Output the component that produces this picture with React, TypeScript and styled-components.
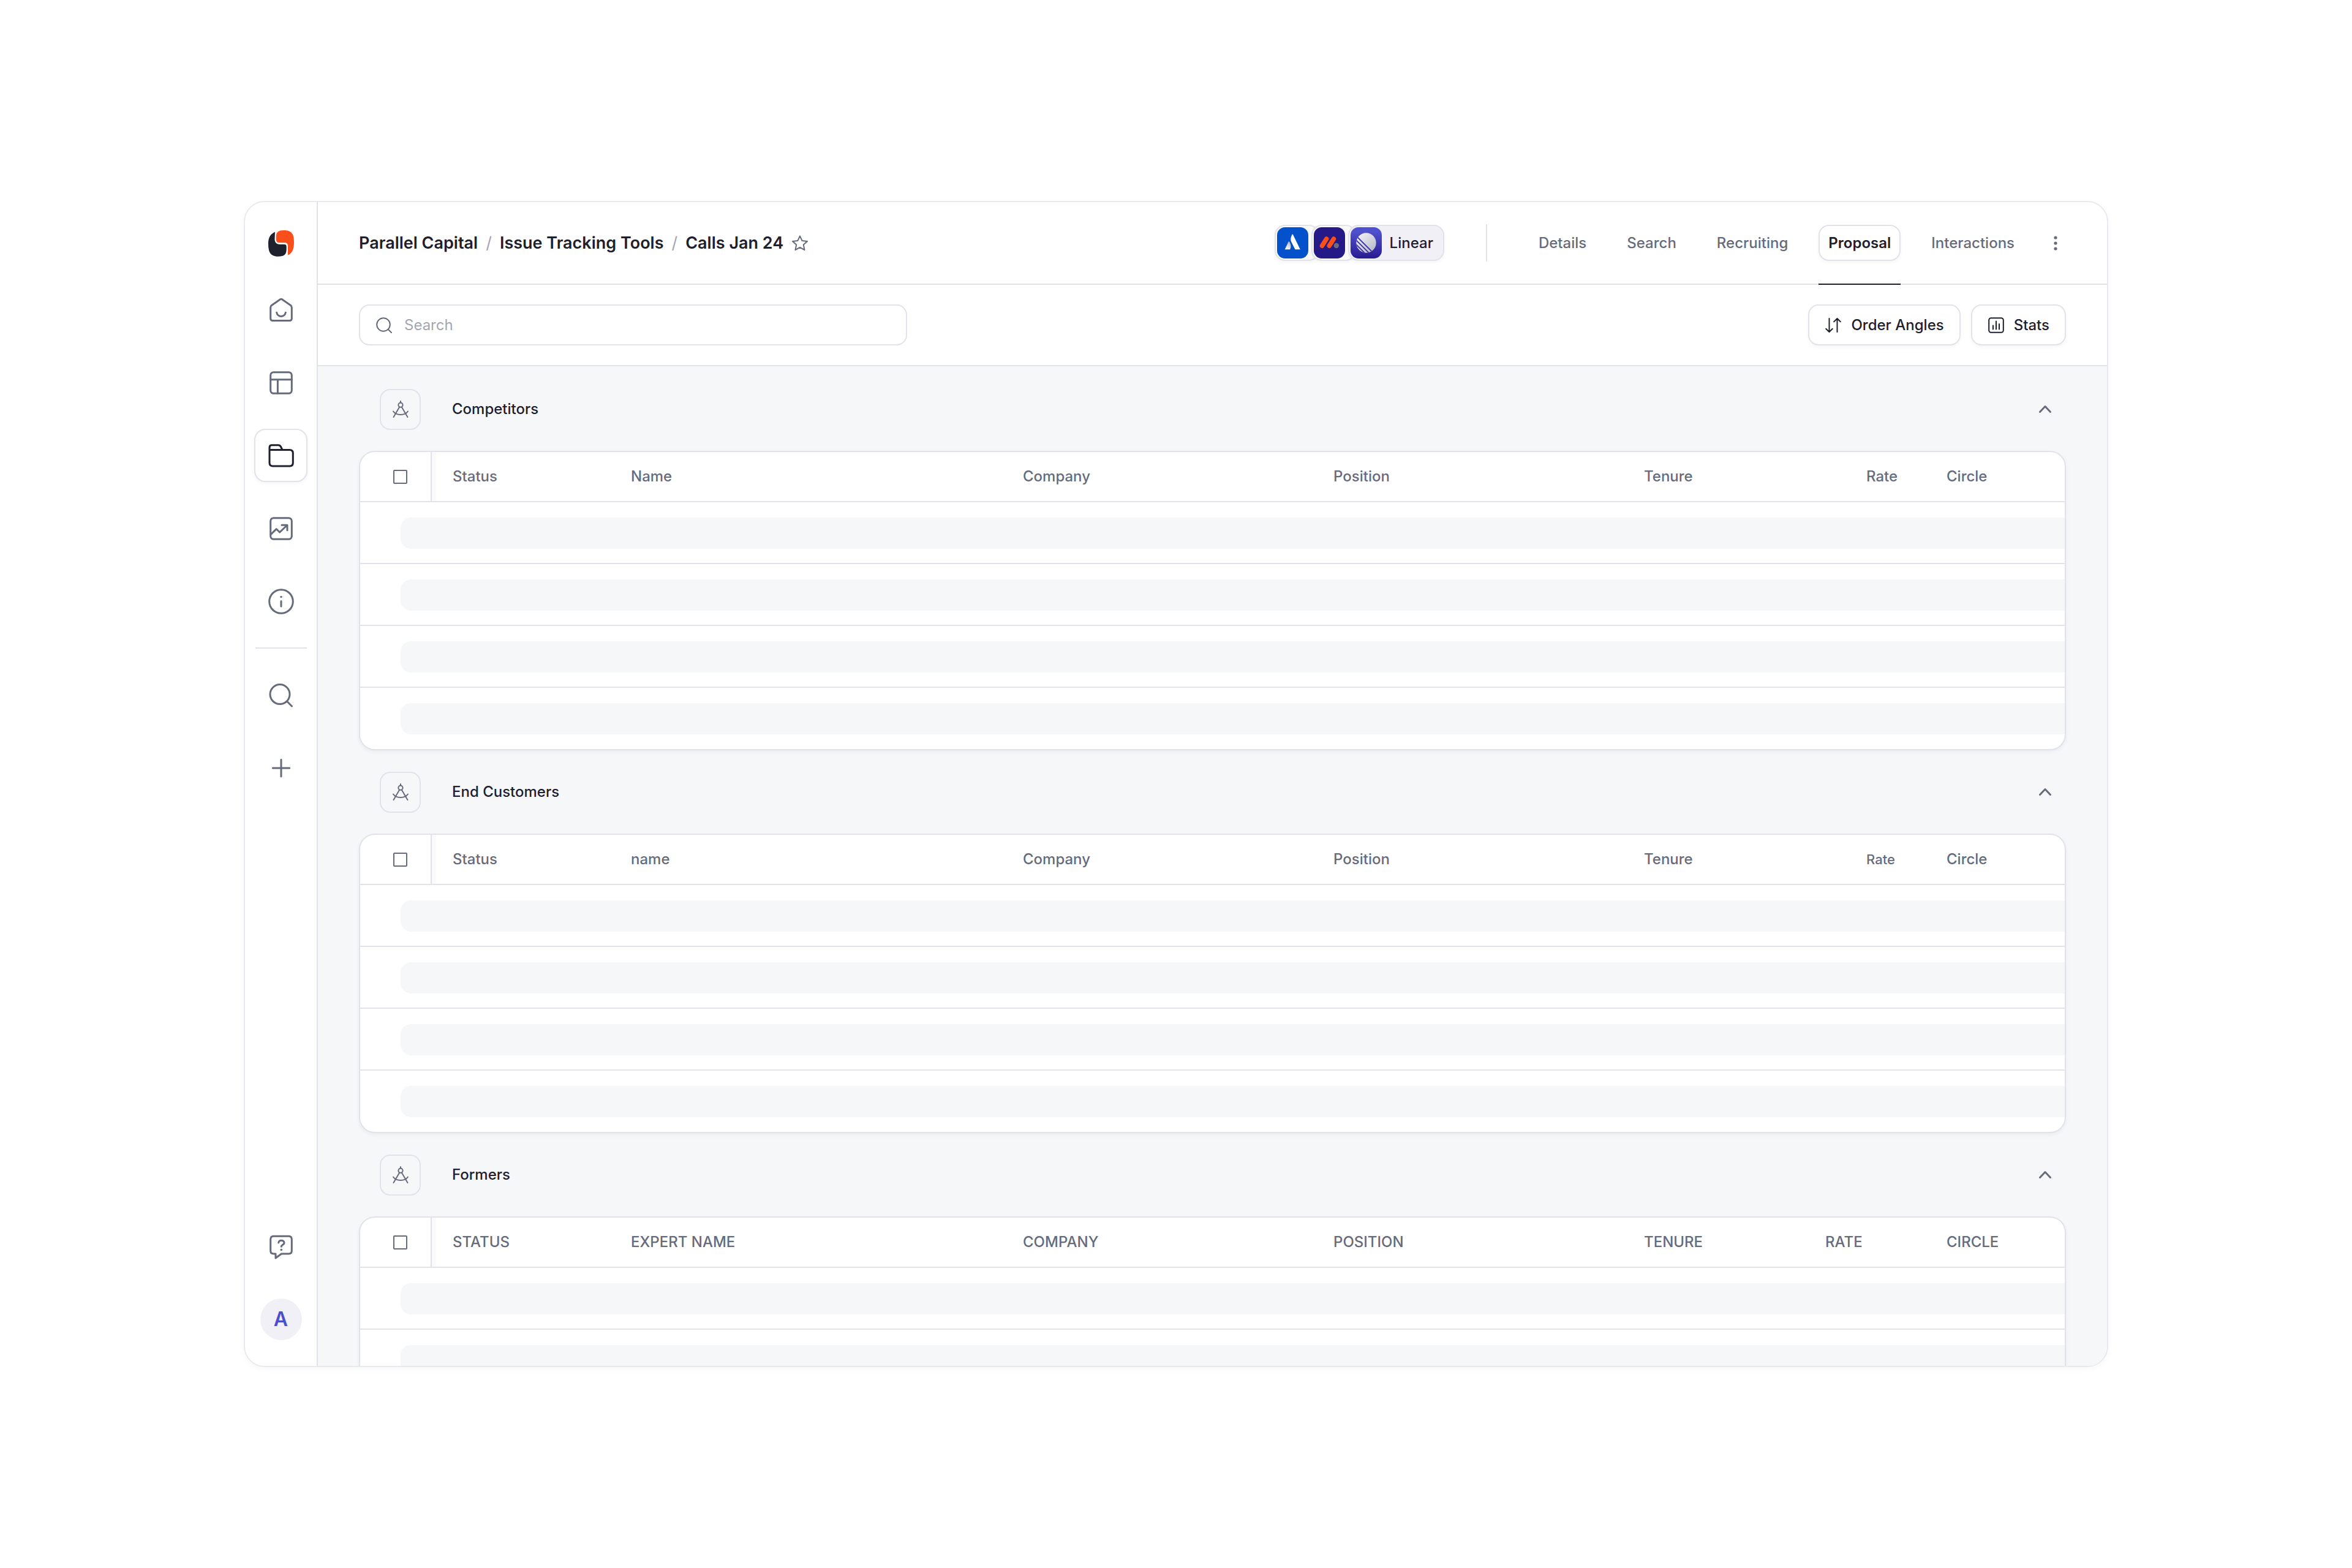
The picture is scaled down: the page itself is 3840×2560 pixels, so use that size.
import React from "react";
import styled, { createGlobalStyle, css } from "styled-components";

const color = {
  ink: "#1e202d",
  muted: "#666b7b",
  faint: "#a3a6b3",
  line: "#e2e3ea",
  edge: "#e9eaef",
  canvas: "#f6f7f9",
  tint: "#f0f0f6",
  accent: "#4c4fcb",
};

const GlobalStyle = createGlobalStyle`
  *, *::before, *::after { box-sizing: border-box; }
  body {
    margin: 0;
    background: #fff;
    color: ${color.ink};
    font-family: Inter, "Liberation Sans", sans-serif;
    font-size: 24px;
    font-weight: 500;
    line-height: 32px;
  }
  button, input { font: inherit; color: inherit; }
`;

const Page = styled.div`
  height: 100vh;
  padding: 328px 398px;
`;

const Window = styled.div`
  display: flex;
  height: 100%;
  border: 2px solid ${color.edge};
  border-radius: 34px;
  overflow: hidden;
  background: #fff;
  box-shadow: 0 3px 12px rgba(30, 32, 45, 0.03);
`;

/* ---------- sidebar ---------- */

const Sidebar = styled.aside`
  display: flex;
  flex: none;
  flex-direction: column;
  align-items: center;
  justify-content: space-between;
  width: 119px;
  padding: 46px 0 42px;
  border-right: 2px solid ${color.line};
`;

const SideGroup = styled.nav<{ $gap: number }>`
  display: flex;
  flex-direction: column;
  align-items: center;
  gap: ${(p) => p.$gap}px;
`;

const LogoLink = styled.a`
  display: block;
  height: 43px;
  margin-bottom: 11px;
`;

const SideButton = styled.button<{ $active?: boolean }>`
  display: grid;
  place-items: center;
  width: 87px;
  height: 87px;
  padding: 0;
  border: 2px solid transparent;
  border-radius: 18px;
  background: #fff;
  color: ${color.muted};
  ${(p) =>
    p.$active &&
    css`
      border-color: ${color.line};
      color: ${color.ink};
      box-shadow: 0 3px 6px rgba(30, 32, 45, 0.04);
    `}
`;

const SideRule = styled.hr`
  width: 84px;
  height: 2px;
  margin: 0;
  border: 0;
  background: ${color.line};
`;

const Avatar = styled.button`
  width: 68px;
  height: 68px;
  padding: 0;
  border: 0;
  border-radius: 50%;
  background: ${color.tint};
  color: ${color.accent};
  font-size: 32px;
  font-weight: 600;
`;

/* ---------- header ---------- */

const Main = styled.main`
  display: flex;
  flex: 1;
  flex-direction: column;
  min-width: 0;
`;

const Header = styled.header`
  display: flex;
  flex: none;
  align-items: center;
  justify-content: space-between;
  height: 135px;
  padding: 0 67px;
  border-bottom: 2px solid ${color.line};
`;

const Breadcrumb = styled.nav`
  display: flex;
  align-items: center;
  gap: 13px;
  font-size: 27px;
  font-weight: 600;
`;

const Crumb = styled.a`
  color: ${color.ink};
  text-decoration: none;
`;

const Slash = styled.span`
  color: ${color.faint};
  font-weight: 400;
`;

const IconButton = styled.button<{ $width: number }>`
  display: grid;
  place-items: center;
  width: ${(p) => p.$width}px;
  height: 34px;
  padding: 0;
  border: 0;
  background: none;
  color: ${color.muted};
`;

const HeaderRight = styled.div`
  display: flex;
  align-items: center;
  align-self: stretch;
`;

const Companies = styled.div`
  display: flex;
`;

const CompanyPill = styled.button<{ $tinted?: boolean }>`
  display: flex;
  align-items: center;
  gap: 13px;
  height: 59px;
  padding: 0 16px 0 2px;
  border: 2px solid ${color.line};
  border-radius: 17px;
  background: ${(p) => (p.$tinted ? color.tint : "#fafafb")};
  box-shadow: 0 3px 6px rgba(30, 32, 45, 0.04);
  & + & {
    margin-left: -13px;
  }
`;

const HeaderRule = styled.div`
  width: 2px;
  height: 61px;
  margin: 0 68px;
  background: ${color.line};
`;

const Tabs = styled.nav`
  display: flex;
  align-self: stretch;
  align-items: stretch;
  gap: 34px;
  margin: 0 34px 0 0;
`;

const Tab = styled.a<{ $active?: boolean }>`
  display: flex;
  align-items: center;
  margin-bottom: -2px;
  border-bottom: 2px solid ${(p) => (p.$active ? color.ink : "transparent")};
  color: ${(p) => (p.$active ? color.ink : color.muted)};
  font-weight: ${(p) => (p.$active ? 600 : 500)};
  text-decoration: none;
`;

const TabLabel = styled.span<{ $active?: boolean }>`
  display: flex;
  align-items: center;
  height: 59px;
  padding: 0 14px;
  border: 2px solid ${(p) => (p.$active ? color.line : "transparent")};
  border-radius: 17px;
  box-shadow: ${(p) => (p.$active ? "0 3px 6px rgba(30, 32, 45, 0.04)" : "none")};
`;

/* ---------- toolbar ---------- */

const Toolbar = styled.div`
  display: flex;
  flex: none;
  align-items: center;
  justify-content: space-between;
  height: 133px;
  padding: 0 67px;
  border-bottom: 2px solid ${color.line};
`;

const SearchBox = styled.label`
  display: flex;
  align-items: center;
  gap: 19px;
  width: 895px;
  height: 67px;
  padding: 0 25px;
  border: 2px solid ${color.line};
  border-radius: 17px;
  color: ${color.muted};
`;

const SearchInput = styled.input`
  flex: 1;
  min-width: 0;
  padding: 0;
  border: 0;
  outline: 0;
  background: none;
  font-weight: 400;
  &::placeholder {
    color: ${color.faint};
    opacity: 1;
  }
`;

const Actions = styled.div`
  display: flex;
  gap: 17px;
`;

const ActionButton = styled.button`
  display: flex;
  align-items: center;
  gap: 15px;
  height: 67px;
  padding: 0 25px;
  border: 2px solid ${color.line};
  border-radius: 17px;
  background: #fff;
  box-shadow: 0 3px 6px rgba(30, 32, 45, 0.04);
`;

/* ---------- sections ---------- */

const Content = styled.div`
  flex: 1;
  min-height: 0;
  padding: 2px 67px 0;
  overflow: hidden;
  background: ${color.canvas};
`;

const SectionHeader = styled.div`
  display: flex;
  align-items: center;
  height: 136px;
  padding: 0 17px 0 34px;
`;

const SectionIcon = styled.span`
  display: grid;
  place-items: center;
  width: 67px;
  height: 67px;
  margin-right: 51px;
  border: 2px solid ${color.line};
  border-radius: 17px;
  color: ${color.muted};
`;

const SectionTitle = styled.h2`
  flex: 1;
  margin: 0;
  font-size: 24px;
  font-weight: 500;
`;

const Card = styled.div`
  border: 2px solid ${color.line};
  border-radius: 26px;
  overflow: hidden;
  background: #fff;
  box-shadow: 0 3px 6px rgba(30, 32, 60, 0.05);
`;

const Table = styled.table`
  width: 100%;
  table-layout: fixed;
  border-collapse: separate;
  border-spacing: 0;
`;

const HeadCell = styled.th<{ $width?: number; $indent?: number; $small?: boolean }>`
  width: ${(p) => (p.$width ? `${p.$width}px` : "auto")};
  height: 82px;
  padding: 0 0 0 ${(p) => p.$indent ?? 34}px;
  border-bottom: 2px solid ${color.line};
  color: ${color.muted};
  font-size: ${(p) => (p.$small ? 22 : 24)}px;
  font-weight: 500;
  text-align: left;
`;

const CheckCell = styled(HeadCell)`
  border-right: 2px solid ${color.line};
  line-height: 0;
`;

const FirstCell = styled(HeadCell)`
  background: linear-gradient(to right, #fafafb 7px, transparent 7px);
`;

const Checkbox = styled.input`
  appearance: none;
  display: block;
  width: 23px;
  height: 23px;
  margin: 0;
  border: 2px solid ${color.muted};
  border-radius: 2px;
  background: #fff;
`;

const Row = styled.tr`
  &:last-child td {
    padding-bottom: 24px;
    border-bottom: 0;
  }
`;

const LoadingCell = styled.td`
  padding: 25px 0 23px 66px;
  border-bottom: 2px solid ${color.line};
`;

const Skeleton = styled.div`
  height: 51px;
  border-radius: 17px 0 0 17px;
  background: ${color.canvas};
`;

/* ---------- icons ---------- */

const Icon = ({ size, stroke, children }: { size: number; stroke: number; children: React.ReactNode }) => (
  <svg
    width={size}
    height={size}
    viewBox={`0 0 ${size} ${size}`}
    fill="none"
    stroke="currentColor"
    strokeWidth={stroke}
    strokeLinecap="round"
    strokeLinejoin="round"
    aria-hidden="true"
  >
    {children}
  </svg>
);

const Logo = () => (
  <svg width="42" height="43" viewBox="0 0 42 43" aria-hidden="true">
    <path
      fill={color.ink}
      d="M11 2.7C3.5 6 0 11.5 0 22C0 36.500 4 42.700 16.500 42.700C26 42.700 29.700 39.500 29.700 31V26.500C29.700 24 28.700 23 26.300 23H19.500C13.500 23 10.500 20 10.500 14.500Z"
    />
    <path
      fill="#fa4e1b"
      d="M12.700 12C12.700 3 16 0 25 0C38 0 42 5.500 42 19C42 31 39 37.500 32 40.700V26C32 22 30.300 20.300 26.500 20.300H18.500C14.700 20.300 12.700 18.300 12.700 14.500Z"
    />
  </svg>
);

const HomeIcon = () => (
  <Icon size={42} stroke={3}>
    <path d="M19.500 3.800Q21 2.800 22.500 3.800L36.500 13.500Q38.300 14.800 38.300 17V35Q38.300 38.500 34.800 38.500H7.200Q3.700 38.500 3.700 35V17Q3.700 14.800 5.500 13.500Z" />
    <path d="M13.700 25.300C15.200 33.500 26.800 33.500 28.300 25.300" />
  </Icon>
);

const LayoutIcon = () => (
  <Icon size={42} stroke={3}>
    <rect x="3.700" y="3.700" width="34.600" height="34.600" rx="5" />
    <path d="M3.700 15.700H38.300M15.400 15.700V38.300" />
  </Icon>
);

const FolderIcon = () => (
  <Icon size={42} stroke={3}>
    <path d="M2 11.500V7.500Q2 3.700 5.800 3.700H16.500Q19 3.700 20.300 6L23 11.500H35Q40.300 11.500 40.300 16.700V32.800Q40.300 38 35 38H7.300Q2 38 2 32.800V11.500H23" />
  </Icon>
);

const ChartIcon = () => (
  <Icon size={42} stroke={3}>
    <rect x="3.700" y="3.700" width="34.600" height="34.600" rx="5" />
    <path d="M4.300 30.300L13.300 21.700L18.700 27L30.700 15.500M22 15.300H31V23.700" />
  </Icon>
);

const InfoIcon = () => (
  <Icon size={42} stroke={3}>
    <circle cx="21" cy="21" r="19.300" />
    <path d="M21 20.500V29" />
    <circle cx="21" cy="13.500" r="1.700" fill="currentColor" stroke="none" />
  </Icon>
);

const BigSearchIcon = () => (
  <Icon size={42} stroke={3}>
    <circle cx="19" cy="19.600" r="16" />
    <path d="M30.500 31L38.500 39" />
  </Icon>
);

const PlusIcon = () => (
  <Icon size={42} stroke={3}>
    <path d="M21 7.300V34.700M7.300 21H34.700" />
  </Icon>
);

const HelpIcon = () => (
  <Icon size={42} stroke={3}>
    <path d="M8.700 3.300H33.300Q38.300 3.300 38.300 8.300V27Q38.300 32 33.300 32H21.500L12 39V32H8.700Q3.700 32 3.700 27V8.300Q3.700 3.300 8.700 3.300Z" />
    <path d="M16.800 14C17 8.800 26 8.800 26 14.300C26 17.500 21.300 17 21.300 20.300" />
    <circle cx="21.300" cy="25.500" r="1.800" fill="currentColor" stroke="none" />
  </Icon>
);

const StarIcon = () => (
  <Icon size={28} stroke={2}>
    <path d="M14 2.300L17.500 9.900L26 10.900L19.800 16.600L21.500 25L14 20.900L6.500 25L8.200 16.600L2 10.900L10.500 9.900Z" />
  </Icon>
);

const DotsIcon = () => (
  <svg width="6" height="24" viewBox="0 0 6 24" fill="currentColor" aria-hidden="true">
    <circle cx="3" cy="3" r="2.600" />
    <circle cx="3" cy="12" r="2.600" />
    <circle cx="3" cy="21" r="2.600" />
  </svg>
);

const SearchIcon = () => (
  <Icon size={28} stroke={2}>
    <circle cx="13" cy="13" r="10.800" />
    <path d="M20.700 20.700L26 26" />
  </Icon>
);

const OrderIcon = () => (
  <Icon size={28} stroke={2}>
    <path d="M7.500 3V25M2.200 19.700L7.500 25L12.800 19.700M20.500 25V3M15.200 8.300L20.500 3L25.800 8.300" />
  </Icon>
);

const StatsIcon = () => (
  <Icon size={28} stroke={2}>
    <rect x="2.200" y="2.200" width="23.600" height="23.600" rx="3.500" />
    <path d="M9 14.500V20.500M14 7.500V20.500M19 12V20.500" />
  </Icon>
);

const CompassIcon = () => (
  <Icon size={30} stroke={2}>
    <path d="M15 2V4.300M13.200 11.500L3.500 28M16.800 11.500L26.500 28M3 18.500C8 25.800 22 25.800 27 18.500" />
    <circle cx="15" cy="8.200" r="3.600" />
  </Icon>
);

const ChevronIcon = () => (
  <Icon size={24} stroke={3}>
    <path d="M3.500 16.500L12 7.500L20.500 16.500" />
  </Icon>
);

const AtlassianMark = () => (
  <svg width="51" height="51" viewBox="0 0 51 51" aria-hidden="true">
    <defs>
      <linearGradient id="atl" x1="21" y1="24" x2="15" y2="36" gradientUnits="userSpaceOnUse">
        <stop offset="0" stopColor="#aeb4c4" />
        <stop offset="1" stopColor="#fff" />
      </linearGradient>
    </defs>
    <rect width="51" height="51" rx="13" fill="#0451cc" />
    <path fill="url(#atl)" d="M12.700 36.300L18.300 24.300Q19.300 22.300 20.500 24.300C23 28.500 23 32 21.200 36.300Z" />
    <path fill="#fff" d="M24.500 12Q25.200 10.300 26 12L37.800 36.300H29.500L23.800 25C21.500 20.500 22 17.500 24.500 12Z" />
  </svg>
);

const MondayMark = () => (
  <svg width="51" height="51" viewBox="0 0 51 51" aria-hidden="true">
    <rect width="51" height="51" rx="13" fill="#241986" />
    <path d="M13.500 30.300L20.700 19M25.300 30.300L32.500 19" stroke="#fa4e1b" strokeWidth="7.400" strokeLinecap="round" />
    <circle cx="36.800" cy="30" r="4.200" fill="#686d7d" />
  </svg>
);

const LinearMark = () => (
  <svg width="51" height="51" viewBox="0 0 51 51" aria-hidden="true">
    <defs>
      <linearGradient id="lin-bg" x1="0" y1="8" x2="0" y2="49" gradientUnits="userSpaceOnUse">
        <stop offset="0" stopColor="#4f50cd" />
        <stop offset="1" stopColor="#2a1d93" />
      </linearGradient>
      <linearGradient id="lin-disc" x1="16" y1="12" x2="38" y2="38" gradientUnits="userSpaceOnUse">
        <stop offset="0" stopColor="#ededf2" />
        <stop offset="1" stopColor="#b9bcc8" />
      </linearGradient>
      <clipPath id="lin-clip">
        <circle cx="25.500" cy="25.500" r="16.200" />
      </clipPath>
    </defs>
    <rect width="51" height="51" rx="13" fill="url(#lin-bg)" />
    <circle cx="25.500" cy="25.500" r="16.200" fill="url(#lin-disc)" />
    <path
      d="M9.500 14.500L37 42M6.500 18.500L33 45M5 24L26 45"
      stroke="#3a31ac"
      strokeWidth="1.800"
      clipPath="url(#lin-clip)"
    />
  </svg>
);

/* ---------- data ---------- */

type Column = { label: string; width?: number; indent?: number; small?: boolean };
type Group = { title: string; columns: Column[] };

const columns = (name: string, rate: Column, upper = false): Column[] =>
  [
    { label: "Status", width: 291 },
    { label: name },
    { label: "Company", width: 507 },
    { label: "Position", width: 507 },
    { label: "Tenure", width: 296 },
    { width: 198, ...rate },
    { label: "Circle", width: 227 },
  ].map((c) => (upper ? { ...c, label: c.label.toUpperCase() } : c));

const groups: Group[] = [
  { title: "Competitors", columns: columns("Name", { label: "Rate", indent: 101 }) },
  { title: "End Customers", columns: columns("name", { label: "Rate", indent: 101, small: true }) },
  { title: "Formers", columns: columns("Expert name", { label: "Rate" }, true) },
];

const Section = ({ title, columns: [first, ...rest] }: Group) => (
  <section>
    <SectionHeader>
      <SectionIcon>
        <CompassIcon />
      </SectionIcon>
      <SectionTitle>{title}</SectionTitle>
      <IconButton $width={34} aria-label={`Collapse ${title}`}>
        <ChevronIcon />
      </IconButton>
    </SectionHeader>
    <Card>
      <Table>
        <thead>
          <tr>
            <CheckCell $width={117} $indent={54}>
              <Checkbox type="checkbox" aria-label={`Select all in ${title}`} />
            </CheckCell>
            <FirstCell $width={first.width}>{first.label}</FirstCell>
            {rest.map((c) => (
              <HeadCell key={c.label} $width={c.width} $indent={c.indent} $small={c.small}>
                {c.label}
              </HeadCell>
            ))}
          </tr>
        </thead>
        <tbody>
          {[1, 2, 3, 4].map((n) => (
            <Row key={n}>
              <LoadingCell colSpan={8}>
                <Skeleton />
              </LoadingCell>
            </Row>
          ))}
        </tbody>
      </Table>
    </Card>
  </section>
);

const tabs = ["Details", "Search", "Recruiting", "Proposal", "Interactions"];

export default function App() {
  return (
    <>
      <GlobalStyle />
      <Page>
        <Window>
          <Sidebar>
            <SideGroup $gap={32} aria-label="Primary">
              <LogoLink href="#" aria-label="Start page">
                <Logo />
              </LogoLink>
              <SideButton aria-label="Home">
                <HomeIcon />
              </SideButton>
              <SideButton aria-label="Boards">
                <LayoutIcon />
              </SideButton>
              <SideButton $active aria-label="Projects">
                <FolderIcon />
              </SideButton>
              <SideButton aria-label="Trends">
                <ChartIcon />
              </SideButton>
              <SideButton aria-label="Information">
                <InfoIcon />
              </SideButton>
              <SideRule />
              <SideButton aria-label="Find">
                <BigSearchIcon />
              </SideButton>
              <SideButton aria-label="Add">
                <PlusIcon />
              </SideButton>
            </SideGroup>
            <SideGroup $gap={41} aria-label="Account">
              <SideButton aria-label="Help">
                <HelpIcon />
              </SideButton>
              <Avatar>A</Avatar>
            </SideGroup>
          </Sidebar>
          <Main>
            <Header>
              <Breadcrumb aria-label="Breadcrumb">
                <Crumb href="#">Parallel Capital</Crumb>
                <Slash>/</Slash>
                <Crumb href="#">Issue Tracking Tools</Crumb>
                <Slash>/</Slash>
                <Crumb href="#">Calls Jan 24</Crumb>
                <IconButton $width={28} aria-label="Add to favourites">
                  <StarIcon />
                </IconButton>
              </Breadcrumb>
              <HeaderRight>
                <Companies>
                  <CompanyPill aria-label="Atlassian">
                    <AtlassianMark />
                  </CompanyPill>
                  <CompanyPill aria-label="Monday">
                    <MondayMark />
                  </CompanyPill>
                  <CompanyPill $tinted>
                    <LinearMark />
                    Linear
                  </CompanyPill>
                </Companies>
                <HeaderRule />
                <Tabs aria-label="Project">
                  {tabs.map((t) => (
                    <Tab key={t} href="#" $active={t === "Proposal"}>
                      <TabLabel $active={t === "Proposal"}>{t}</TabLabel>
                    </Tab>
                  ))}
                </Tabs>
                <IconButton $width={34} aria-label="More">
                  <DotsIcon />
                </IconButton>
              </HeaderRight>
            </Header>
            <Toolbar>
              <SearchBox>
                <SearchIcon />
                <SearchInput type="text" placeholder="Search" aria-label="Search" />
              </SearchBox>
              <Actions>
                <ActionButton>
                  <OrderIcon />
                  Order Angles
                </ActionButton>
                <ActionButton>
                  <StatsIcon />
                  Stats
                </ActionButton>
              </Actions>
            </Toolbar>
            <Content>
              {groups.map((g) => (
                <Section key={g.title} {...g} />
              ))}
            </Content>
          </Main>
        </Window>
      </Page>
    </>
  );
}
